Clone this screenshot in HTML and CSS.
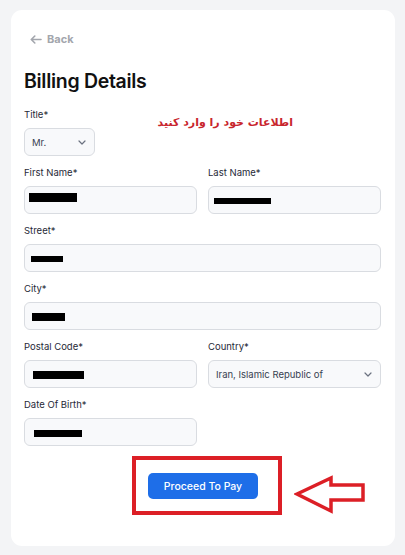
FILE: index.html
```html
<!DOCTYPE html>
<html lang="en">
<head>
<meta charset="utf-8">
<title>Billing Details</title>
<link rel="stylesheet" href="styles.css">
</head>
<body>
<div class="card">
  <a class="back" href="#">
    <svg class="back-icon" width="12" height="9" viewBox="0 0 12 9"><path d="M11 4.5H1.5M4.8 1L1.3 4.5L4.8 8" fill="none" stroke="#a3a6ad" stroke-width="1.6" stroke-linecap="round" stroke-linejoin="round"/></svg>
    <span>Back</span>
  </a>
  <h1 class="heading">Billing Details</h1>
  <div class="form">
    <p class="note" dir="rtl">اطلاعات خود را وارد کنید</p>
    <div class="field">
      <label class="label">Title*</label>
      <div class="box select small">
        <span class="value">Mr.</span>
        <svg class="chev" width="8" height="5" viewBox="0 0 8 5"><path d="M1 1l3 3 3-3" fill="none" stroke="#6b7280" stroke-width="1.2" stroke-linecap="round" stroke-linejoin="round"/></svg>
      </div>
    </div>
    <div class="field"></div>
    <div class="field">
      <label class="label">First Name*</label>
      <div class="box"><span class="redact r-first"></span></div>
    </div>
    <div class="field">
      <label class="label">Last Name*</label>
      <div class="box"><span class="redact r-last"></span></div>
    </div>
    <div class="field wide">
      <label class="label">Street*</label>
      <div class="box"><span class="redact r-street"></span></div>
    </div>
    <div class="field wide">
      <label class="label">City*</label>
      <div class="box"><span class="redact r-city"></span></div>
    </div>
    <div class="field">
      <label class="label">Postal Code*</label>
      <div class="box"><span class="redact r-postal"></span></div>
    </div>
    <div class="field">
      <label class="label">Country*</label>
      <div class="box select">
        <span class="value">Iran, Islamic Republic of</span>
        <svg class="chev" width="8" height="5" viewBox="0 0 8 5"><path d="M1 1l3 3 3-3" fill="none" stroke="#6b7280" stroke-width="1.2" stroke-linecap="round" stroke-linejoin="round"/></svg>
      </div>
    </div>
    <div class="field">
      <label class="label">Date Of Birth*</label>
      <div class="box"><span class="redact r-dob"></span></div>
    </div>
  </div>
  <div class="actions">
    <div class="cta">
      <button class="pay" type="button">Proceed To Pay</button>
      <span class="highlight"></span>
      <svg class="pointer" width="74" height="40" viewBox="0 0 74 40"><path d="M3 19L37 3V10H69V25H37V36Z" fill="#fff" stroke="#dc1f26" stroke-width="3.5" stroke-linejoin="miter"/></svg>
    </div>
  </div>
</div>
</body>
</html>
```
FILE: styles.css
```css
html, body {
  margin: 0;
  padding: 0;
}
body {
  background: #f3f4f6;
  font-family: Inter, "Noto Sans", sans-serif;
  padding: 10px 10px 9px 11px;
}
.card {
  background: #ffffff;
  border-radius: 11px;
  padding: 21px 14px 47px 13px;
}
.back {
  display: flex;
  align-items: center;
  gap: 5px;
  margin-left: 6px;
  height: 16px;
  color: #a3a6ad;
  font-size: 11px;
  font-weight: 700;
  text-decoration: none;
}
.back-icon {
  display: block;
}
.heading {
  margin: 22px 0 15px;
  font-size: 19.5px;
  line-height: 24px;
  font-weight: 600;
  color: #111111;
  letter-spacing: -0.3px;
}
.form {
  position: relative;
  display: grid;
  grid-template-columns: 1fr 1fr;
  column-gap: 11px;
  row-gap: 10px;
}
.field.wide {
  grid-column: span 2;
}
.label {
  display: block;
  font-size: 9.5px;
  line-height: 14px;
  margin-bottom: 6px;
  color: #1f2937;
}
.box {
  box-sizing: border-box;
  height: 28px;
  border: 1px solid #d9dce1;
  border-radius: 6px;
  background: #f8f9fb;
  display: flex;
  align-items: center;
  padding: 0 7px 0 4px;
  font-size: 9.5px;
  color: #374151;
}
.select {
  justify-content: space-between;
  padding-left: 7px;
  padding-right: 8px;
}
.small {
  width: 71px;
}
.chev {
  display: block;
}
.redact {
  display: block;
  background: #000;
}
.r-first { width: 48px; height: 9px; margin-top: -6px; }
.r-last { width: 57px; height: 6px; margin-left: 1px; margin-top: 2px; }
.r-street { width: 32px; height: 6px; margin-left: 2px; margin-top: 2px; }
.r-city { width: 33px; height: 8px; margin-left: 3px; margin-top: 2px; }
.r-postal { width: 51px; height: 8px; margin-left: 4px; margin-top: 2px; }
.r-dob { width: 48px; height: 7px; margin-left: 5px; margin-top: 2px; }
.note {
  position: absolute;
  right: 88px;
  top: 6px;
  margin: 0;
  font-family: "DejaVu Sans", sans-serif;
  font-weight: 700;
  font-size: 11px;
  line-height: 18px;
  color: #c8252c;
}
.actions {
  display: flex;
  justify-content: center;
  margin-top: 27px;
  padding-left: 1px;
}
.cta {
  position: relative;
}
.pay {
  display: block;
  width: 110px;
  height: 26px;
  border: none;
  border-radius: 5px;
  background: #1e6ee8;
  color: #ffffff;
  font-family: Inter, "Noto Sans", sans-serif;
  font-size: 10.5px;
  font-weight: 500;
  padding: 0;
}
.highlight {
  position: absolute;
  left: -16px;
  right: -24px;
  top: -17px;
  bottom: -16px;
  border: 4px solid #dc1f26;
}
.pointer {
  position: absolute;
  left: 146px;
  top: 2px;
}
```
